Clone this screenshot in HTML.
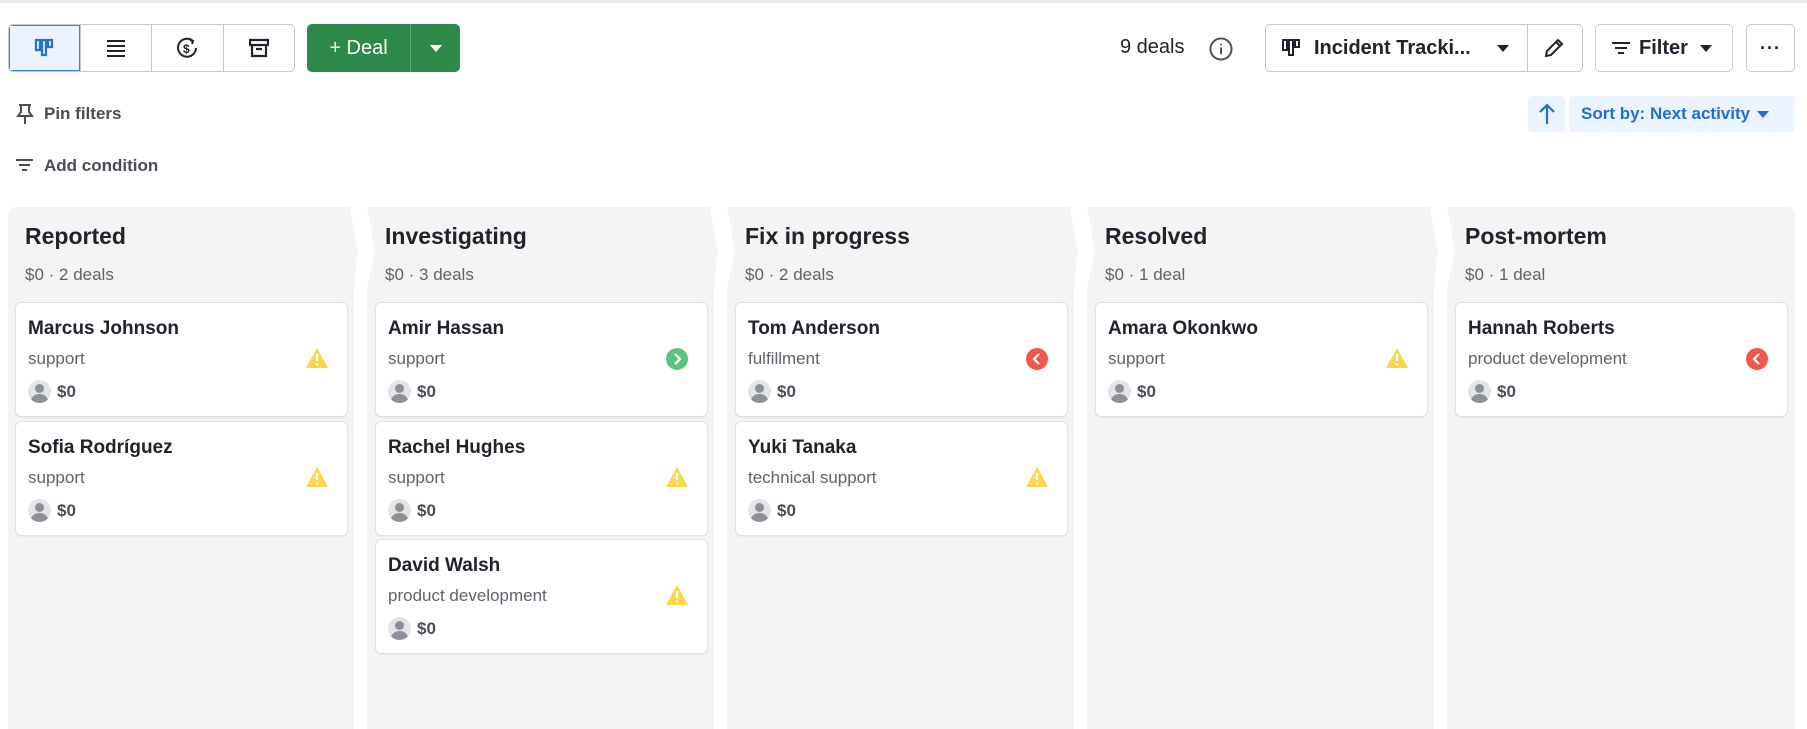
<!DOCTYPE html>
<html><head><meta charset="utf-8"><style>
*{box-sizing:border-box;margin:0;padding:0}
body{width:1807px;height:729px;overflow:hidden;background:#fff;font-family:"Liberation Sans",sans-serif;color:#21232c;position:relative}
.a{position:absolute}
.topline{left:0;top:0;width:1807px;height:3px;background:#e9eaec}
.seg{left:8px;top:24px;width:287px;height:48px;border:1px solid #c6c8cc;border-radius:5px;display:flex;overflow:hidden}
.seg div{flex:1;display:flex;align-items:center;justify-content:center;border-left:1px solid #c6c8cc}
.seg div:first-child{border-left:none;background:#eaf3fe;box-shadow:inset 0 0 0 1px #3d83e0}
.deal{left:307px;top:24px;width:153px;height:48px;background:#2d8a4b;border-radius:5px;color:#fff;display:flex}
.deal .m{width:104px;display:flex;align-items:center;justify-content:center;font-size:20px;border-right:1px solid #5aa877}
.deal .d{flex:1;display:flex;align-items:center;justify-content:center}
.btn{top:24px;height:48px;border:1px solid #c6c8cc;border-radius:5px;display:flex;align-items:center}
.tri{width:0;height:0;border-left:6px solid transparent;border-right:6px solid transparent;border-top:7px solid #21232c}
.col{top:207px;height:522px;background:#f4f4f4}
.ch{font-size:23px;font-weight:bold;position:absolute;left:17px;top:16px}
.cs{font-size:17px;color:#5f636b;position:absolute;left:17px;top:58px}
.card{position:absolute;left:8px;width:331px;height:113px;background:#fff;border-radius:5px;box-shadow:0 0 0 1px #e0e1e3,0 1px 2px rgba(0,0,0,.12)}
.card .n{position:absolute;left:12px;top:15px;font-size:19px;font-weight:bold;color:#21232c}
.card .s{position:absolute;left:12px;top:46px;font-size:17px;color:#5f636b}
.card .v{position:absolute;left:12px;top:77px;display:flex;align-items:center;gap:6px;font-size:17px;font-weight:bold;color:#4a4d55}
.av{width:23px;height:23px;border-radius:50%;background:#e3e4e6;position:relative;overflow:hidden}
.av:before{content:"";position:absolute;left:7px;top:4px;width:9px;height:9px;border-radius:50%;background:#8d9096}
.av:after{content:"";position:absolute;left:3px;top:14px;width:17px;height:14px;border-radius:50%;background:#8d9096}
.ic{position:absolute;right:18px;top:44px}
</style></head><body>
<div class="a topline"></div>
<div class="a seg">
 <div><svg width="22" height="22" viewBox="0 0 22 22" fill="none" stroke="#2a6fd1" stroke-width="2.2"><path d="M2 3h18M3 3v10h4V3M9 3v15h4V3M15 3v7h4V3"/></svg></div>
 <div><svg width="20" height="18" viewBox="0 0 20 18" stroke="#21232c" stroke-width="2"><path d="M1 2h18M1 7h18M1 12h18M1 17h18"/></svg></div>
 <div><svg width="22" height="22" viewBox="0 0 22 22" fill="none" stroke="#21232c" stroke-width="2"><path d="M17 4A9 9 0 1 0 20 11"/><path d="M14 3l3 1-1 3"/><text x="7" y="16" font-size="12" font-weight="bold" fill="#21232c" stroke="none" font-family="Liberation Sans">$</text></svg></div>
 <div><svg width="20" height="20" viewBox="0 0 20 20" fill="none" stroke="#21232c" stroke-width="2.2"><path d="M1 2h18v5H1zM3 7v11h14V7M7 11h6"/></svg></div>
</div>
<div class="a deal"><div class="m">+&nbsp;Deal</div><div class="d"><div class="tri" style="border-top-color:#fff"></div></div></div>

<div class="a" style="left:1120px;top:36px;font-size:20px;color:#21232c">9 deals</div>
<svg class="a" style="left:1209px;top:37px" width="24" height="24" viewBox="0 0 25 25" fill="none" stroke="#4a4d55" stroke-width="2"><circle cx="12.5" cy="12.5" r="11"/><path d="M12.5 11v7M12.5 7v1.5"/></svg>
<div class="a btn" style="left:1265px;width:318px">
 <svg style="margin-left:14px" width="22" height="22" viewBox="0 0 22 22" fill="none" stroke="#21232c" stroke-width="2"><path d="M2 3h18M3 3v10h4V3M9 3v15h4V3M15 3v7h4V3"/></svg>
 <span style="margin-left:12px;font-size:20px;font-weight:bold">Incident Tracki...</span>
 <div class="tri" style="margin-left:26px"></div>
 <div style="margin-left:18px;width:1px;height:46px;background:#c6c8cc"></div>
 <svg style="margin-left:15px" width="22" height="22" viewBox="0 0 22 22" fill="none" stroke="#21232c" stroke-width="2"><path d="M3 19l1-5L15 3l4 4L8 18zM13 5l4 4"/></svg>
</div>
<div class="a btn" style="left:1595px;width:138px">
 <svg style="margin-left:15px" width="20" height="16" viewBox="0 0 20 16" stroke="#21232c" stroke-width="2"><path d="M1 3h18M4 8h12M7 13h6"/></svg>
 <span style="margin-left:8px;font-size:20px;font-weight:bold">Filter</span>
 <div class="tri" style="margin-left:12px"></div>
</div>
<div class="a btn" style="left:1746px;width:49px;justify-content:center;font-weight:bold;font-size:18px;letter-spacing:1px">···</div>

<svg class="a" style="left:16px;top:103px" width="18" height="22" viewBox="0 0 18 22" fill="none" stroke="#4a4d55" stroke-width="2"><path d="M3 2h12M5 2v7l-3 4h14l-3-4V2M9 13v8"/></svg>
<div class="a" style="left:44px;top:104px;font-size:17px;font-weight:bold;color:#4a4d55">Pin filters</div>
<svg class="a" style="left:15px;top:158px" width="19" height="14" viewBox="0 0 19 14" stroke="#4a4d55" stroke-width="2"><path d="M1 2h17M4 7h11M7 12h5"/></svg>
<div class="a" style="left:44px;top:156px;font-size:17px;font-weight:bold;color:#4a4d55">Add condition</div>

<div class="a" style="left:1528px;top:96px;width:37px;height:36px;background:#eaf3fe;border-radius:4px;display:flex;align-items:center;justify-content:center"><svg width="18" height="22" viewBox="0 0 18 22" fill="none" stroke="#1f6fd0" stroke-width="2.2"><path d="M9 21V2M2 9l7-7 7 7"/></svg></div>
<div class="a" style="left:1569px;top:96px;width:226px;height:36px;background:#eaf3fe;border-radius:4px;display:flex;align-items:center;padding-left:12px;font-size:17px;font-weight:bold;color:#1f6fd0">Sort by:&nbsp;Next activity<div class="tri" style="margin-left:7px;border-top-color:#1f6fd0"></div></div>

<!-- columns -->
<div class="a col" style="left:8px;width:350px;clip-path:polygon(0 0,342px 0,350px 44px,346px 82px,346px 100%,0 100%);border-radius:8px 0 0 0">
 <div class="ch">Reported</div><div class="cs">$0 · 2 deals</div>
</div>
<div class="a col" style="left:367px;width:351px;clip-path:polygon(0 0,343px 0,351px 44px,347px 82px,347px 100%,0 100%,0 82px,8px 44px,0 0)">
 <div class="ch" style="left:18px">Investigating</div><div class="cs" style="left:18px">$0 · 3 deals</div>
</div>
<div class="a col" style="left:727px;width:351px;clip-path:polygon(0 0,343px 0,351px 44px,347px 82px,347px 100%,0 100%,0 82px,8px 44px,0 0)">
 <div class="ch" style="left:18px">Fix in progress</div><div class="cs" style="left:18px">$0 · 2 deals</div>
</div>
<div class="a col" style="left:1087px;width:351px;clip-path:polygon(0 0,343px 0,351px 44px,347px 82px,347px 100%,0 100%,0 82px,8px 44px,0 0)">
 <div class="ch" style="left:18px">Resolved</div><div class="cs" style="left:18px">$0 · 1 deal</div>
</div>
<div class="a col" style="left:1447px;width:348px;border-radius:0 8px 0 0;clip-path:polygon(0 0,100% 0,100% 100%,0 100%,0 82px,8px 44px)">
 <div class="ch" style="left:18px">Post-mortem</div><div class="cs" style="left:18px">$0 · 1 deal</div>
</div>

<svg width="0" height="0" style="position:absolute"><defs>
<symbol id="w" viewBox="0 0 24 22"><path d="M12 1L23 21H1z" fill="#fcd54a"/><path d="M12 7v7M12 16.5v2" stroke="#fff" stroke-width="2.4"/></symbol>
<symbol id="g" viewBox="0 0 24 24"><circle cx="12" cy="12" r="11" fill="#5ec27e"/><path d="M10 7l5 5-5 5" stroke="#fff" stroke-width="2.2" fill="none"/></symbol>
<symbol id="r" viewBox="0 0 24 24"><circle cx="12" cy="12" r="11" fill="#f0574b"/><path d="M14 7l-5 5 5 5" stroke="#fff" stroke-width="2.2" fill="none"/></symbol>
</defs></svg>

<!-- cards -->
<div class="a" style="left:8px;top:0">
 <div class="card" style="top:303px"><div class="n">Marcus Johnson</div><div class="s">support</div><div class="v"><div class="av"></div>$0</div><svg class="ic" width="24" height="22"><use href="#w"/></svg></div>
 <div class="card" style="top:422px"><div class="n">Sofia Rodríguez</div><div class="s">support</div><div class="v"><div class="av"></div>$0</div><svg class="ic" width="24" height="22"><use href="#w"/></svg></div>
</div>
<div class="a" style="left:368px;top:0">
 <div class="card" style="top:303px"><div class="n">Amir Hassan</div><div class="s">support</div><div class="v"><div class="av"></div>$0</div><svg class="ic" width="24" height="24"><use href="#g"/></svg></div>
 <div class="card" style="top:422px"><div class="n">Rachel Hughes</div><div class="s">support</div><div class="v"><div class="av"></div>$0</div><svg class="ic" width="24" height="22"><use href="#w"/></svg></div>
 <div class="card" style="top:540px"><div class="n">David Walsh</div><div class="s">product development</div><div class="v"><div class="av"></div>$0</div><svg class="ic" width="24" height="22"><use href="#w"/></svg></div>
</div>
<div class="a" style="left:728px;top:0">
 <div class="card" style="top:303px"><div class="n">Tom Anderson</div><div class="s">fulfillment</div><div class="v"><div class="av"></div>$0</div><svg class="ic" width="24" height="24"><use href="#r"/></svg></div>
 <div class="card" style="top:422px"><div class="n">Yuki Tanaka</div><div class="s">technical support</div><div class="v"><div class="av"></div>$0</div><svg class="ic" width="24" height="22"><use href="#w"/></svg></div>
</div>
<div class="a" style="left:1088px;top:0">
 <div class="card" style="top:303px"><div class="n">Amara Okonkwo</div><div class="s">support</div><div class="v"><div class="av"></div>$0</div><svg class="ic" width="24" height="22"><use href="#w"/></svg></div>
</div>
<div class="a" style="left:1448px;top:0">
 <div class="card" style="top:303px"><div class="n">Hannah Roberts</div><div class="s">product development</div><div class="v"><div class="av"></div>$0</div><svg class="ic" width="24" height="24"><use href="#r"/></svg></div>
</div>
</body></html>
